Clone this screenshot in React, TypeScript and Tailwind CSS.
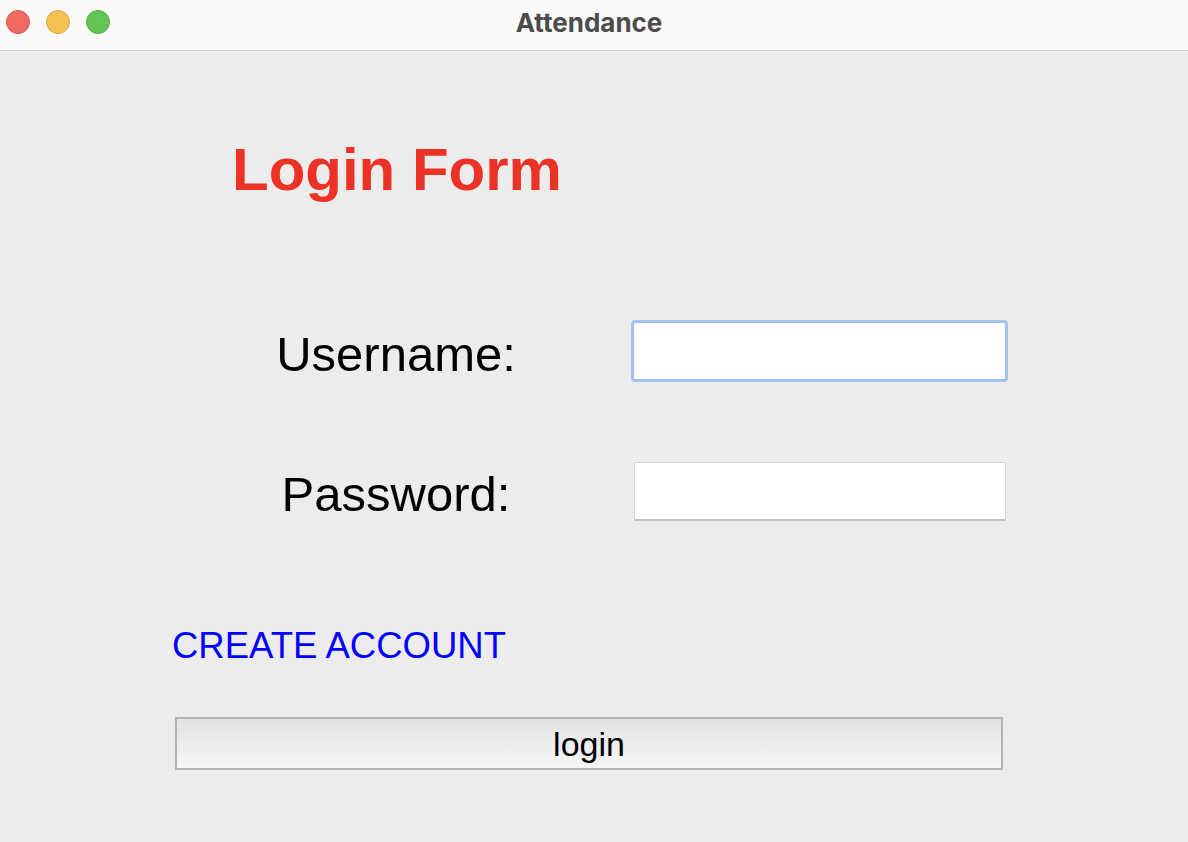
export default function App() {
  return (
    <div className="flex h-[842px] w-[1188px] flex-col overflow-hidden bg-[#ececec] font-['Liberation_Sans',Arial,sans-serif]">
      {/* window title bar */}
      <div className="relative flex h-[51px] shrink-0 items-center justify-center border-b border-[#c8c8c8] bg-[#fbfaf9] pb-[5px]">
        <div className="absolute left-[6px] top-[10px] flex gap-[16px]">
          <span className="h-[24px] w-[24px] rounded-full border border-[#d9574c] bg-[#ef6b5f]" />
          <span className="h-[24px] w-[24px] rounded-full border border-[#dca543] bg-[#f6c150]" />
          <span className="h-[24px] w-[24px] rounded-full border border-[#53ab45] bg-[#62c655]" />
        </div>
        <span className="mr-[10px] font-['Inter',sans-serif] text-[26px] font-bold text-[#4c4c4c]">Attendance</span>
      </div>

      <div className="flex flex-col pt-[89px]">
        <h1 className="ml-[232px] text-[60px] font-bold leading-none text-[#ec3225]">Login Form</h1>

        <div className="mt-[122px] flex items-center">
          <label className="ml-[246px] w-[300px] pt-[6px] text-center text-[49px] leading-none text-black">Username:</label>
          <input
            type="text"
            className="ml-[87px] h-[58px] w-[373px] rounded-[2px] border border-[#9dbde9] bg-white shadow-[0_0_0_2px_#a5c4ef] outline-none"
          />
        </div>

        <div className="mt-[82px] flex items-center">
          <label className="ml-[246px] w-[300px] pt-[6px] text-center text-[49px] leading-none text-black">Password:</label>
          <input
            type="password"
            className="ml-[88px] h-[59px] w-[372px] border border-b-2 border-[#d6d6d6] border-b-[#c2c2c2] bg-white outline-none"
          />
        </div>

        <a className="ml-[172px] mt-[107px] w-fit text-[36.5px] leading-none text-[#0000ff]">CREATE ACCOUNT</a>

        <button className="ml-[175px] mt-[52px] h-[53px] w-[828px] border-2 border-[#b2b2b2] bg-gradient-to-b from-[#e2e2e2] to-[#f6f6f6] pt-[2px] text-[34px] leading-none text-black">
          login
        </button>
      </div>
    </div>
  );
}
